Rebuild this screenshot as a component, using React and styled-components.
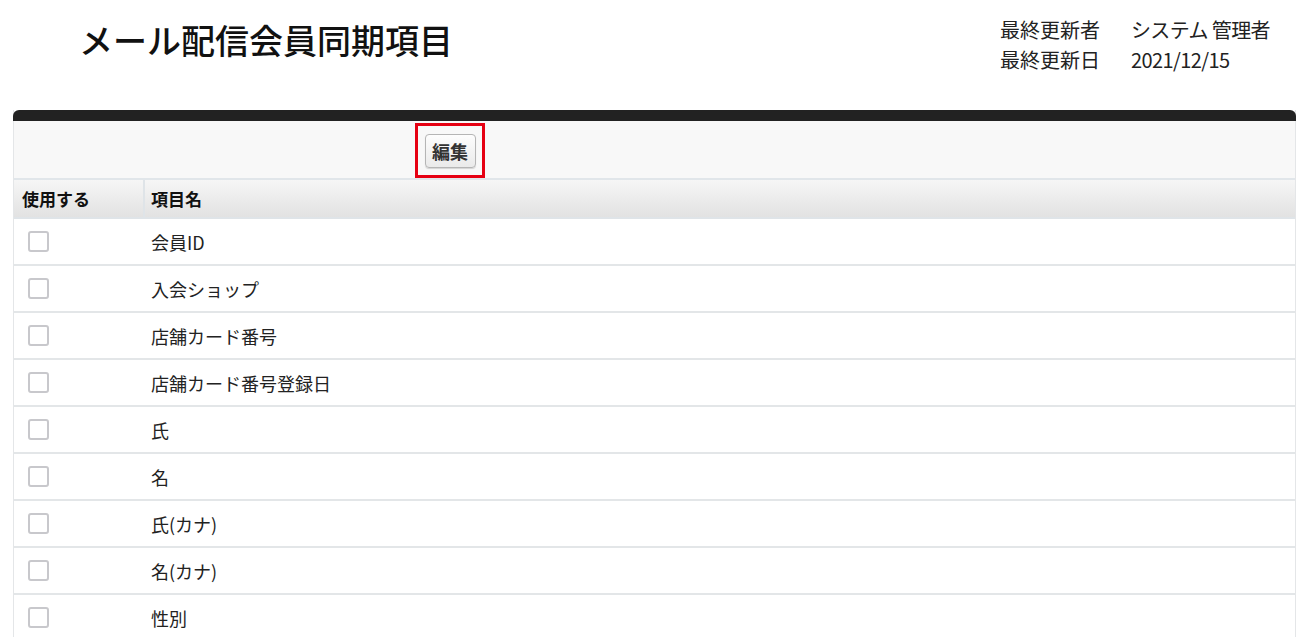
import styled, { createGlobalStyle } from 'styled-components'

const GlobalStyle = createGlobalStyle`
  body {
    margin: 0;
    background: #fff;
    font-family: "Noto Sans CJK JP", "Noto Sans", sans-serif;
    color: #222;
  }
`

const Page = styled.div`
  width: 1306px;
`

const Header = styled.div`
  display: flex;
  justify-content: space-between;
  align-items: flex-start;
  height: 110px;
  padding: 0 36px 0 79px;
  box-sizing: border-box;
`

const Title = styled.h1`
  margin: 18px 0 0;
  font-size: 34px;
  font-weight: 500;
  line-height: 44px;
  color: #111;
`

const Meta = styled.div`
  margin-top: 16px;
  display: grid;
  grid-template-columns: 131px auto;
  row-gap: 3px;
  font-size: 20px;
  line-height: 27px;
  color: #222;
`

const MetaValue = styled.span`
  letter-spacing: -0.6px;
`

const Panel = styled.div`
  margin: 0 10px 0 13px;
  border-left: 1px solid #e4e6e8;
  border-right: 1px solid #e4e6e8;
`

const TopBar = styled.div`
  height: 11px;
  background: #222;
  border-radius: 6px 6px 0 0;
  margin: 0 -1px;
`

const Toolbar = styled.div`
  height: 59px;
  box-sizing: border-box;
  background: #f8f8f8;
  display: flex;
  align-items: flex-start;
  padding: 2px 0 0 401px;
  border-bottom: 2px solid #e1e6ea;
`

const Highlight = styled.div`
  width: 64px;
  height: 49px;
  border: 3px solid #e60012;
  display: flex;
  align-items: center;
  justify-content: center;
`

const EditButton = styled.button`
  width: 51px;
  height: 34px;
  padding: 0;
  font-family: inherit;
  font-size: 18px;
  font-weight: 700;
  color: #333;
  background: linear-gradient(#fdfdfd, #eaeaea);
  border: 1px solid #b5b5b5;
  border-radius: 4px;
  box-shadow: 0 1px 1px rgba(0, 0, 0, 0.15);
`

const Table = styled.div`
  display: grid;
  grid-template-columns: 129px 1fr;
`

const HeadCell = styled.div`
  height: 37px;
  display: flex;
  align-items: center;
  padding-left: ${({ $pad }) => $pad}px;
  font-size: 17px;
  font-weight: 700;
  color: #111;
  background: linear-gradient(#f6f6f6, #e2e2e2);
  border-left: ${({ $divider }) => ($divider ? '2px solid #dfe4e8' : 'none')};
  border-bottom: 2px solid #dfe4e8;
`

const Cell = styled.div`
  height: 45px;
  display: flex;
  align-items: center;
  padding-left: ${({ $pad }) => $pad}px;
  font-size: 18px;
  color: #222;
  border-bottom: 2px solid #e3e6e8;
`

const Box = styled.span`
  width: 17px;
  height: 17px;
  border: 2px solid #c8c8cc;
  border-radius: 3px;
  background: #fff;
`

const items = [
  '会員ID',
  '入会ショップ',
  '店舗カード番号',
  '店舗カード番号登録日',
  '氏',
  '名',
  '氏(カナ)',
  '名(カナ)',
  '性別',
]

export default function App() {
  return (
    <Page>
      <GlobalStyle />
      <Header>
        <Title>メール配信会員同期項目</Title>
        <Meta>
          <span>最終更新者</span>
          <MetaValue>システム 管理者</MetaValue>
          <span>最終更新日</span>
          <MetaValue>2021/12/15</MetaValue>
        </Meta>
      </Header>
      <Panel>
        <TopBar />
        <Toolbar>
          <Highlight>
            <EditButton>編集</EditButton>
          </Highlight>
        </Toolbar>
        <Table>
          <HeadCell $pad={8}>使用する</HeadCell>
          <HeadCell $pad={6} $divider>項目名</HeadCell>
          {items.map((name) => [
            <Cell key={name + '-c'} $pad={14}>
              <Box />
            </Cell>,
            <Cell key={name} $pad={8}>{name}</Cell>,
          ])}
        </Table>
      </Panel>
    </Page>
  )
}
